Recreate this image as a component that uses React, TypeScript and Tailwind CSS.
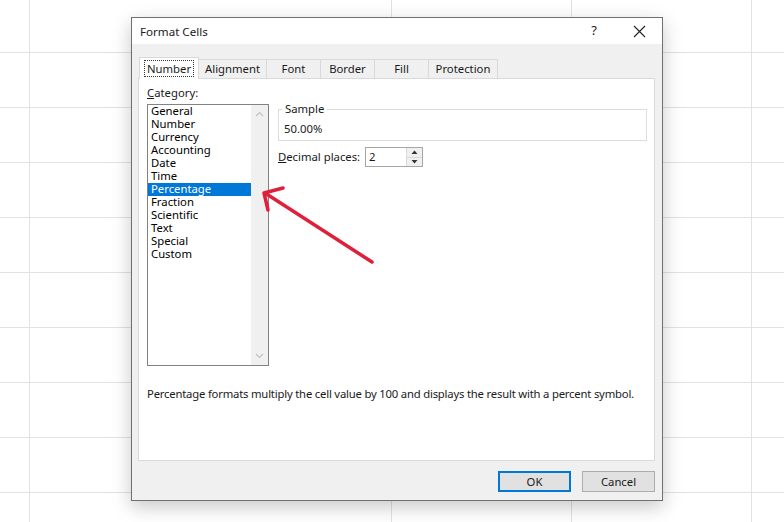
import React from 'react'

const categories = [
  'General',
  'Number',
  'Currency',
  'Accounting',
  'Date',
  'Time',
  'Percentage',
  'Fraction',
  'Scientific',
  'Text',
  'Special',
  'Custom',
]

const tabs = [
  { label: 'Alignment', w: 'w-[68px]' },
  { label: 'Font', w: 'w-[54px]' },
  { label: 'Border', w: 'w-[54px]' },
  { label: 'Fill', w: 'w-[54px]' },
  { label: 'Protection', w: 'w-[69px]' },
]

function SheetGrid() {
  // spreadsheet cells behind the dialog
  const cells = Array.from({ length: 50 })
  return (
    <div className="grid grid-cols-[30px_362px_180px_180px_180px] grid-rows-[53px_repeat(9,55px)]">
      {cells.map((_, i) => (
        <div key={i} className="border-r border-b border-[#e2e2e2]" />
      ))}
    </div>
  )
}

function ListBox() {
  return (
    <div className="flex w-[122px] h-[262px] border border-[#828282] bg-white">
      <div className="flex-1 flex flex-col">
        {categories.map((c) => (
          <div
            key={c}
            className={
              c === 'Percentage'
                ? 'h-[13px] flex items-center pl-[3px] bg-[#0078d7] text-white'
                : 'h-[13px] flex items-center pl-[3px] text-[#000]'
            }
          >
            <span className="leading-[12px] mt-[-1px]">{c}</span>
          </div>
        ))}
      </div>
      <div className="w-[17px] bg-[#f0f0f0] flex flex-col items-center justify-between py-[6px]">
        <svg width="9" height="6" viewBox="0 0 9 6">
          <path d="M1 5 L4.5 1.5 L8 5" fill="none" stroke="#c2c2c2" strokeWidth="1.2" />
        </svg>
        <svg width="9" height="6" viewBox="0 0 9 6">
          <path d="M1 1 L4.5 4.5 L8 1" fill="none" stroke="#c2c2c2" strokeWidth="1.2" />
        </svg>
      </div>
    </div>
  )
}

function Spinner() {
  return (
    <div className="flex w-[58px] h-[20px] border border-[#a6a6a6] bg-white">
      <div className="flex-1 pl-[3px] leading-[17px]">2</div>
      <div className="w-[16px] flex flex-col border-l border-[#dadada] bg-[#f0f0f0]">
        <div className="flex-1 flex items-center justify-center border-b border-[#dadada]">
          <svg width="7" height="4" viewBox="0 0 7 4">
            <path d="M0.5 4 L3.5 0.5 L6.5 4 Z" fill="#333" />
          </svg>
        </div>
        <div className="flex-1 flex items-center justify-center">
          <svg width="7" height="4" viewBox="0 0 7 4">
            <path d="M0.5 0 L3.5 3.5 L6.5 0 Z" fill="#333" />
          </svg>
        </div>
      </div>
    </div>
  )
}

export default function App() {
  return (
    <div className="relative w-[784px] h-[522px] overflow-hidden bg-white font-['Noto_Sans',sans-serif] text-[11.3px] text-[#1a1a1a]">
      <SheetGrid />

      {/* FORMAT CELLS DIALOG */}
      <div className="absolute left-[131px] top-[17px] w-[532px] h-[484px] border border-[#707070] bg-[#f0f0f0] shadow-[0_6px_18px_rgba(0,0,0,0.22)] flex flex-col">
        <div className="h-[26px] bg-white flex items-center pl-[8px] pr-[16px]">
          <span className="flex-1 text-[11.6px] leading-[14px] mt-[1px]">Format Cells</span>
          <span className="mr-[36px] text-[13px]">?</span>
          <svg width="13" height="13" viewBox="0 0 13 13">
            <path d="M1 1 L12 12 M12 1 L1 12" stroke="#222" strokeWidth="1.1" />
          </svg>
        </div>

        <div className="flex-1 flex flex-col pl-[6px] pr-[7px] pt-[13px]">
          {/* TABS */}
          <div className="flex items-end h-[21px] relative z-10">
            <div className="ml-[1px] w-[60px] h-[22px] mb-[-1px] bg-white border border-b-0 border-[#d9d9d9] flex items-start justify-center pt-[2px]">
              <span className="px-[2px] leading-[15px] border border-dotted border-[#333]">Number</span>
            </div>
            {tabs.map((t) => (
              <div
                key={t.label}
                className={`${t.w} h-[19px] bg-[#f0f0f0] border border-l-0 border-b-0 border-[#d9d9d9] flex items-start justify-center pt-[1px]`}
              >
                {t.label}
              </div>
            ))}
          </div>

          {/* PANEL */}
          <div className="h-[383px] bg-white border border-[#d9d9d9] pl-[8px] pt-[6px]">
            <div className="h-[16px] leading-[16px] mb-[3px]">
              <span className="underline">C</span>ategory:
            </div>
            <div className="flex gap-[9px]">
              <ListBox />
              <div className="flex flex-col w-[369px]">
                <div className="relative mt-[5px] h-[32px] border border-[#dcdcdc] pl-[5px] pt-[11px]">
                  <span className="absolute left-[3px] top-[-9px] bg-white px-[3px] leading-[16px]">Sample</span>
                  <span className="leading-[16px]">50.00%</span>
                </div>
                <div className="flex items-center mt-[6px]">
                  <span className="w-[87px] whitespace-nowrap">
                    <span className="underline">D</span>ecimal places:
                  </span>
                  <Spinner />
                </div>
              </div>
            </div>
            <div className="mt-[20px] leading-[16px] whitespace-nowrap tracking-[-0.2px]">
              Percentage formats multiply the cell value by 100 and displays the result with a percent symbol.
            </div>
          </div>

          {/* BUTTONS */}
          <div className="flex justify-end gap-[11px] mt-[10px]">
            <button className="w-[73px] h-[21px] border-2 border-[#0078d7] bg-[#e1e1e1] leading-[16px]">OK</button>
            <button className="w-[73px] h-[21px] border border-[#adadad] bg-[#e1e1e1] leading-[18px]">Cancel</button>
          </div>
        </div>
      </div>

      {/* RED ANNOTATION ARROW */}
      <svg className="absolute inset-0 pointer-events-none" width="784" height="522" viewBox="0 0 784 522">
        <g stroke="#e0203a" strokeWidth="3.5" strokeLinecap="round" strokeLinejoin="round" fill="none">
          <path d="M372 262 L265 193" />
          <path d="M283 188 L264 193 L268 210" />
        </g>
      </svg>
    </div>
  )
}
